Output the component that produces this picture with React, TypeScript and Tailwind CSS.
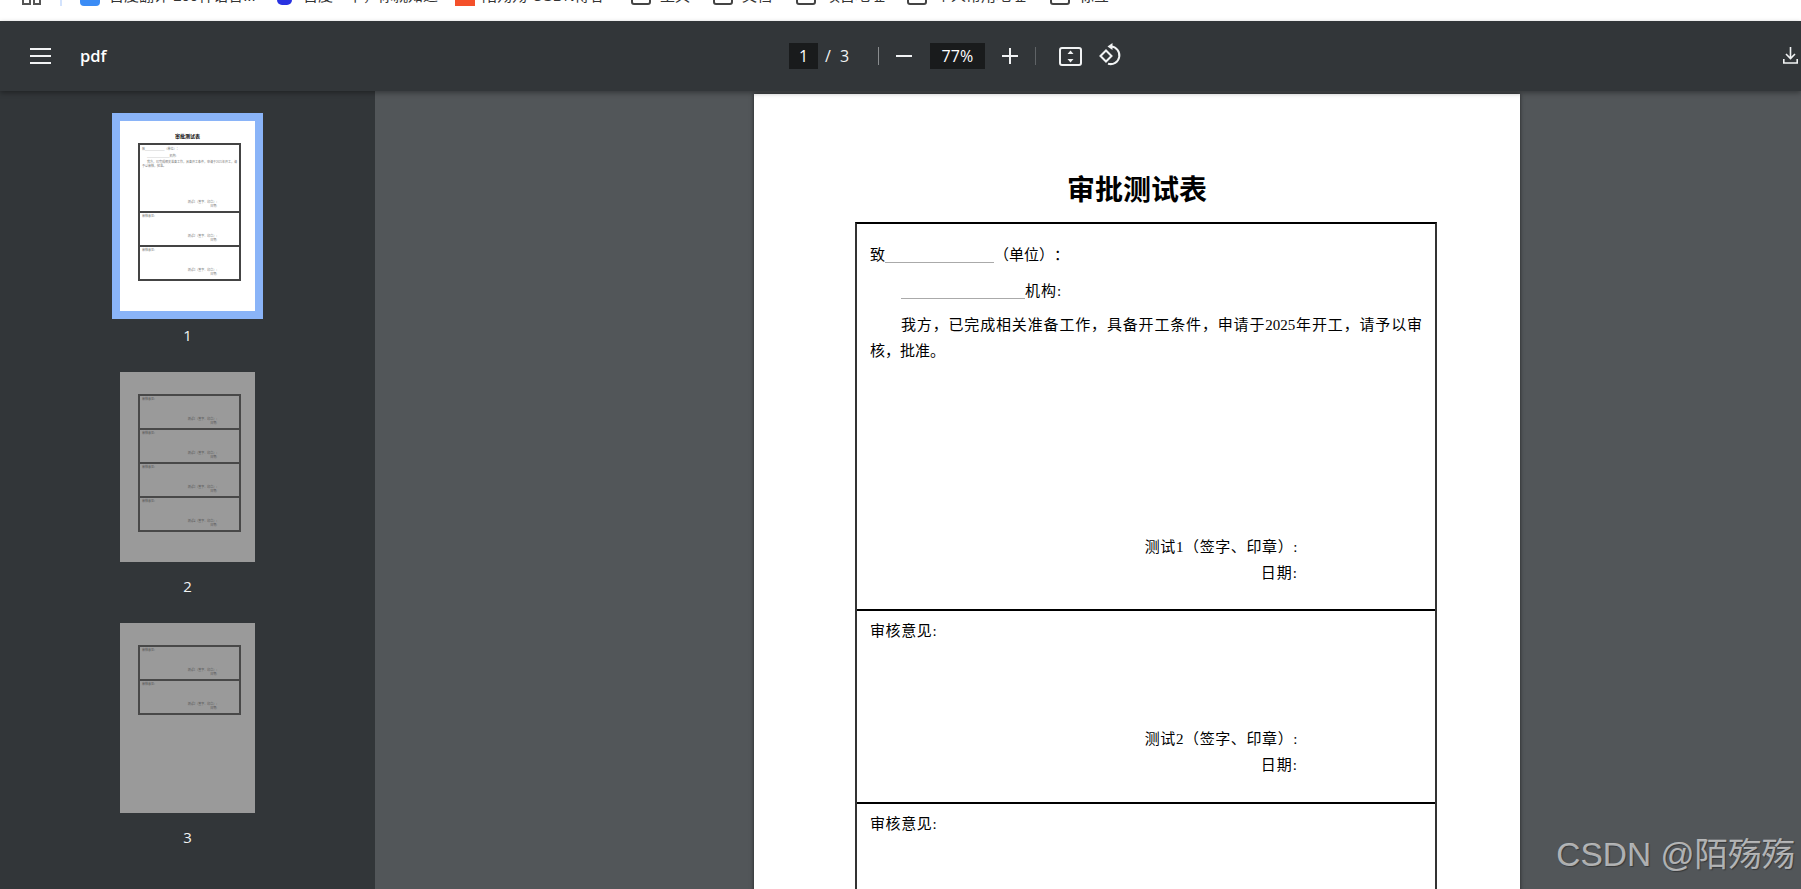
import React from 'react';

const docFont = "font-['Liberation_Serif','Noto_Sans_CJK_SC',serif] [text-spacing-trim:space-all]";

interface Bookmark {
  label: string;
  icon: 'blue' | 'baidu' | 'red' | 'folder';
  className: string;
}

const BOOKMARKS: Bookmark[] = [
  { label: '百度翻译 200种语言...', icon: 'blue', className: 'w-[196px]' },
  { label: '百度一下，你就知道', icon: 'baidu', className: 'w-[179px]' },
  { label: '陌殇殇-CSDN博客', icon: 'red', className: 'w-[176px]' },
  { label: '工具', icon: 'folder', className: 'w-[82px]' },
  { label: '文档', icon: 'folder', className: 'w-[83px]' },
  { label: '项目地址', icon: 'folder', className: 'w-[111px]' },
  { label: '个人常用地址', icon: 'folder', className: 'w-[143px]' },
  { label: '标签', icon: 'folder', className: 'w-[80px]' },
];

const BookmarkIcon = ({ kind }: { kind: Bookmark['icon'] }) => {
  if (kind === 'blue') return <div className="w-5 h-5 mr-[9px] rounded-[4px] bg-[#3b8cf5]" />;
  if (kind === 'baidu') return <div className="w-[15px] h-[18px] ml-[1px] mr-[11px] rounded-[5px] bg-[#2932e1]" />;
  if (kind === 'red') return <div className="w-5 h-5 mr-[7px] bg-[#f4502a]" />;
  return <div className="w-5 h-[18px] mr-[9px] rounded-[3px] border-2 border-[#444]" />;
};

const BookmarkBar = () => (
  <div className="h-[21px] shrink-0 bg-white overflow-hidden">
    <div className="flex items-center h-5 -mt-[14px] pl-[22px] text-[15px] leading-5 text-[#333] font-['Liberation_Sans','Noto_Sans_CJK_SC',sans-serif] whitespace-nowrap">
      <div className="grid grid-cols-2 gap-[2px] w-[19px] mr-[19px]">
        <div className="h-2 border-2 border-[#555]" />
        <div className="h-2 border-2 border-[#555]" />
        <div className="h-2 border-2 border-[#555]" />
        <div className="h-2 border-2 border-[#555]" />
      </div>
      <div className="w-[2px] h-5 mr-[18px] bg-[#d3e3fd]" />
      {BOOKMARKS.map(b => (
        <div key={b.label} className={`flex items-center shrink-0 ${b.className}`}>
          <BookmarkIcon kind={b.icon} />
          <span>{b.label}</span>
        </div>
      ))}
    </div>
  </div>
);

const Toolbar = () => (
  <div className="relative z-10 h-[70px] shrink-0 flex items-center bg-[#323639] text-[#f1f3f4] shadow-[0_2px_5px_rgba(0,0,0,0.35)] font-['Open_Sans',sans-serif]">
    <div className="flex items-center w-[789px] shrink-0 pl-[30px]">
      <svg width="21" height="16" viewBox="0 0 21 16" fill="none" stroke="currentColor" strokeWidth="2">
        <path d="M0 1h21M0 8h21M0 15h21" />
      </svg>
      <span className="ml-[29px] text-[16.5px] font-semibold leading-6 text-white">pdf</span>
    </div>

    <div className="w-[29px] h-[26px] flex items-center justify-center bg-[#191b1c] text-[16px] text-white">1</div>
    <span className="ml-[7px] text-[16px]">/</span>
    <span className="ml-[9px] w-[9px] text-[16px]">3</span>
    <div className="ml-[29px] w-[1px] h-[18px] bg-[#8a8d8f]" />

    <svg className="ml-[17px]" width="16" height="16" viewBox="0 0 16 16" stroke="currentColor" strokeWidth="2">
      <path d="M0 8h16" />
    </svg>
    <div className="ml-[18px] w-[55px] h-[26px] flex items-center justify-center bg-[#191b1c] text-[16px] text-white">77%</div>
    <svg className="ml-[17px]" width="16" height="16" viewBox="0 0 16 16" stroke="currentColor" strokeWidth="2">
      <path d="M0 8h16M8 0v16" />
    </svg>
    <div className="ml-[17px] w-[1px] h-[18px] bg-[#5f6366]" />

    <svg className="ml-[23px]" width="23" height="19" viewBox="0 0 23 19" fill="none">
      <rect x="1" y="1" width="21" height="17" rx="2" stroke="currentColor" strokeWidth="2" />
      <path d="M11.5 3.5l3 3.5h-6zM11.5 15.5l3-3.5h-6z" fill="currentColor" />
    </svg>
    <svg className="ml-[17px] -mt-[2px]" width="24" height="24" viewBox="0 0 24 24" fill="none">
      <path d="M1.5 13L7 7.5 12.5 13 7 18.5z" stroke="currentColor" strokeWidth="2" />
      <path d="M12 3.5a8.8 8.8 0 1 1-3 17.2" stroke="currentColor" strokeWidth="2" />
      <path d="M13.5 0v7L8.5 3.5z" fill="currentColor" />
    </svg>

    <svg className="ml-auto mr-[3px] -mt-[1px]" width="15" height="17" viewBox="0 0 15 17" fill="none" stroke="currentColor" strokeWidth="1.6">
      <path d="M7.5 0v11M3 7l4.5 4.5L12 7M.8 12v4h13.4v-4" />
    </svg>
  </div>
);

interface MiniRow {
  tall?: boolean;
}

const MiniSign = ({ n }: { n: number }) => (
  <div className="mt-auto mb-[3px] pr-[22px] text-right leading-[4px]">
    <div>测试{n}（签字、印章）:</div>
    <div>日期:</div>
  </div>
);

const Thumb = ({ rows, active, label, title }: { rows: MiniRow[]; active?: boolean; label: string; title?: boolean }) => (
  <div className="flex flex-col items-center">
    <div className={active ? 'border-[8px] border-[#8ab4f8] shadow-[0_0_0_1px_#5f7aa5_inset]' : 'border-[8px] border-transparent'}>
      <div className={`w-[135px] h-[190px] flex flex-col items-center ${docFont} ${active ? 'bg-white' : 'bg-[#9a9a9a]'}`}>
        {title ? (
          <div className="h-[22px] pt-[12px] text-[5px] leading-[8px] font-bold text-black">审批测试表</div>
        ) : (
          <div className="h-[22px]" />
        )}
        <div className={`ml-[4px] w-[103px] border-t-2 border-x-2 ${active ? 'border-[#444]' : 'border-[#484848]'} text-[3px] ${active ? 'text-[#777]' : 'text-[#555]'}`}>
          {rows.map((r, i) => (
            <div key={i} className={`flex flex-col border-b-2 ${active ? 'border-[#444]' : 'border-[#484848]'} ${r.tall ? 'h-[68px]' : 'h-[34px]'}`}>
              {r.tall ? (
                <div className="pl-[2px] pt-[2px] pr-[2px]">
                  <div className="leading-[4px]">致_____________（单位）：</div>
                  <div className="mt-[3px] pl-[5px] leading-[4px]">_______________机构:</div>
                  <div className="mt-[2px] leading-[4px] indent-[5px]">我方，已完成相关准备工作，具备开工条件，申请于2025年开工，请予以审核，批准。</div>
                </div>
              ) : (
                <div className="pl-[2px] pt-[1px] leading-[4px]">审核意见:</div>
              )}
              <MiniSign n={i + 1} />
            </div>
          ))}
        </div>
      </div>
    </div>
    <span className="mt-[4px] text-[15px] leading-6 text-[#f1f3f4] font-['Open_Sans',sans-serif]">{label}</span>
  </div>
);

const Sidebar = () => (
  <aside className="w-[375px] shrink-0 bg-[#323639] pt-[22px] flex flex-col gap-[17px] overflow-hidden">
    <Thumb title active label="1" rows={[{ tall: true }, {}, {}]} />
    <Thumb label="2" rows={[{}, {}, {}, {}]} />
    <Thumb label="3" rows={[{}, {}]} />
  </aside>
);

const SignBlock = ({ n }: { n: number }) => (
  <div className="mt-auto pr-[124px] text-right">
    <div className="tracking-[0.6px]">测试{n}（签字、印章）:</div>
    <div className="tracking-[1px]">日期:</div>
  </div>
);

const Page = () => (
  <div className={`ml-[379px] mt-[3px] w-[766px] h-[1200px] shrink-0 bg-white shadow-[0_0_4px_rgba(0,0,0,0.6)] flex flex-col items-center ${docFont} text-black`}>
    <h1 className="mt-[78px] h-[50px] text-[28px] leading-[38px] font-bold">审批测试表</h1>
    <div className="ml-[18px] w-[582px] border-t-2 border-x-2 border-x-[#333] border-t-black text-[15px] leading-[26px]">
      <div className="h-[387px] flex flex-col px-[13px] pt-[18px] pb-[23px] border-b-2 border-black">
        <div>
          致<span className="inline-block w-[109px] h-[17px] border-b border-[#aaa] [vertical-align:-3px]" />（单位）：
        </div>
        <div className="mt-[10px] pl-[31px]">
          <span className="inline-block w-[124px] h-[17px] border-b border-[#aaa] [vertical-align:-3px]" />
          <span className="tracking-[1px]">机构:</span>
        </div>
        <p className="mt-[8px] indent-[31px] text-justify">我方，已完成相关准备工作，具备开工条件，申请于2025年开工，请予以审核，批准。</p>
        <SignBlock n={1} />
      </div>
      <div className="h-[193px] flex flex-col px-[13px] pt-[7px] pb-[24px] border-b-2 border-black">
        <div className="tracking-[0.6px]">审核意见:</div>
        <SignBlock n={2} />
      </div>
      <div className="h-[193px] flex flex-col px-[13px] pt-[7px] pb-[24px] border-b-2 border-black">
        <div className="tracking-[0.6px]">审核意见:</div>
        <SignBlock n={3} />
      </div>
    </div>
  </div>
);

export default function App() {
  return (
    <div className="relative h-screen w-full flex flex-col overflow-hidden bg-[#525659]">
      <BookmarkBar />
      <Toolbar />
      <div className="flex-1 min-h-0 flex overflow-hidden">
        <Sidebar />
        <main className="flex-1 min-w-0 flex items-start overflow-hidden bg-[#525659]">
          <Page />
        </main>
      </div>
      <div className="absolute right-[6px] bottom-[12px] text-[33.5px] leading-[44px] text-white/60 font-['Liberation_Sans','Noto_Sans_CJK_SC',sans-serif] [text-shadow:1px_1px_1px_rgba(0,0,0,0.35)]">
        CSDN @陌殇殇
      </div>
    </div>
  );
}
